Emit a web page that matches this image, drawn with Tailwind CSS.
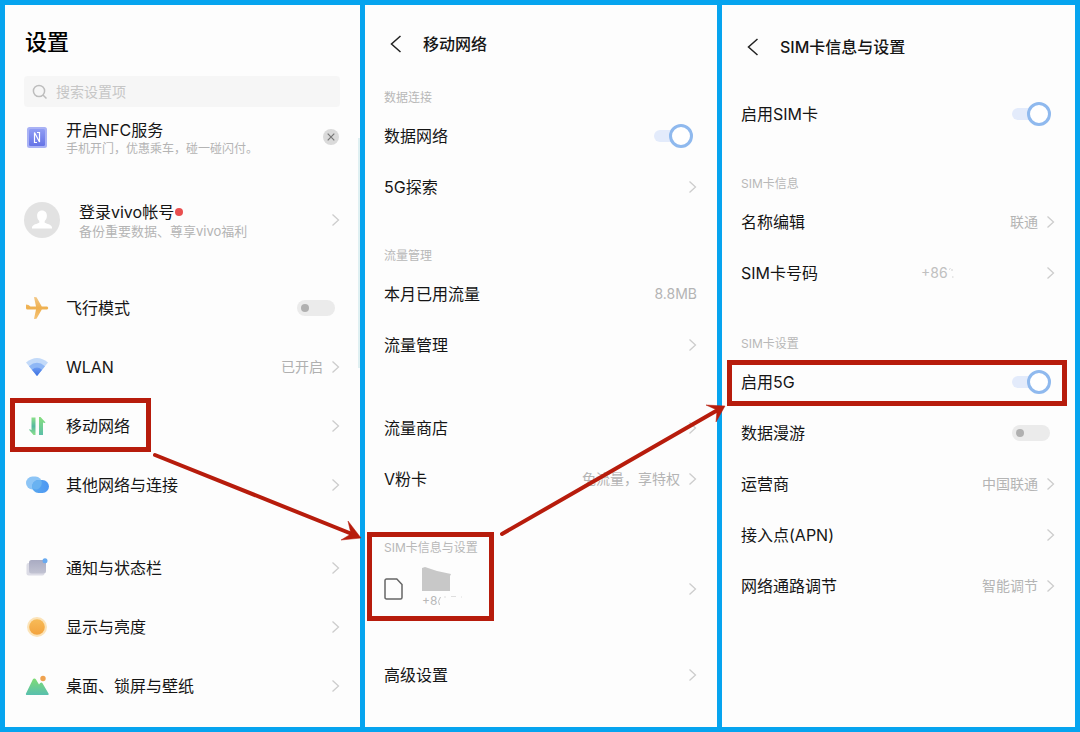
<!DOCTYPE html>
<html lang="zh-CN">
<head>
<meta charset="utf-8">
<meta name="viewport" content="width=device-width, initial-scale=1">
<title>设置</title>
<script src="https://cdn.jsdelivr.net/npm/@tailwindcss/browser@4"></script>
</head>
<body class="font-['Inter','Noto_Sans_CJK_SC',sans-serif] text-[#151515]">
<svg class="hidden" aria-hidden="true">
  <symbol id="chev" viewBox="0 0 8 14"><path d="M.5 1.500l6 5.500-6 5.500" fill="none" stroke="#cdcdcd" stroke-width="1.3"/></symbol>
  <symbol id="back" viewBox="0 0 12 18"><path d="M10.500 1L1.500 9l9 8" fill="none" stroke="#222" stroke-width="1.5"/></symbol>
</svg>
<div class="relative grid min-h-screen grid-cols-[355fr_352fr_353fr] gap-[5px] bg-[#06a4ef] p-[5px]">

  <!-- 设置 -->
  <section class="relative bg-[#fdfdfd] px-5">
    <h1 class="flex h-[71px] items-center pt-1 text-[22px] font-medium text-black">设置</h1>
    <label class="-ml-px flex h-[31px] items-center gap-2 rounded bg-[#f6f6f6] px-2">
      <svg class="size-4" viewBox="0 0 16 16" fill="none" stroke="#bdbdbd" stroke-width="1.5"><circle cx="7" cy="7" r="5.6"/><path d="M11 11l3.500 3.500"/></svg>
      <input type="search" aria-label="搜索设置项" placeholder="搜索设置项" class="min-w-0 flex-1 bg-transparent text-sm outline-none placeholder:text-[#c6c6c6]">
    </label>
    <div class="flex h-[60px] items-center gap-[17px]">
      <svg class="size-6" viewBox="0 0 24 24">
        <defs><linearGradient id="nfc" x1="0" y1="0" x2="0" y2="1"><stop offset="0" stop-color="#8f9cf4"/><stop offset="1" stop-color="#6674e6"/></linearGradient></defs>
        <rect x="2" y="2" width="20" height="21" rx="2.5" fill="#a9b2f5"/><rect x="4" y="4" width="16" height="17" rx="1.5" fill="url(#nfc)"/>
        <path d="M12 17.500H9.500V7.500l5 9.500V7.500H12" fill="none" stroke="#fff" stroke-width="1.2"/>
      </svg>
      <div class="flex-1 pt-[3px]">
        <p class="text-base leading-5">开启NFC服务</p>
        <p class="text-xs leading-[18px] text-[#b4b4b4]">手机开门，优惠乘车，碰一碰闪付。</p>
      </div>
      <button aria-label="关闭" class="mr-px flex size-4 items-center justify-center rounded-full bg-[#dadada]">
        <svg class="size-2" viewBox="0 0 8 8"><path d="M.7.7l6.6 6.6M7.3.7L.7 7.3" stroke="#777" stroke-width="1.2"/></svg>
      </button>
    </div>
    <a href="#account" class="mt-[23px] flex h-[60px] items-center gap-[19px]">
      <svg class="size-9 -ml-px" viewBox="0 0 36 36"><circle cx="18" cy="18" r="18" fill="#e2e2e2"/><path d="M18 8.500c3.200 0 4.900 2.300 4.900 5.300 0 2.400-1 4.200-2.200 5.300v1.600c1.700 1 7.300 1.700 7.300 4.800V26.500H8v-1c0-3.100 5.600-3.800 7.300-4.800v-1.600c-1.200-1.100-2.200-2.900-2.200-5.300 0-3 1.700-5.300 4.900-5.300z" fill="#fff"/></svg>
      <div class="flex-1 pt-px">
        <p class="flex items-center gap-px text-base leading-5">登录vivo帐号<span class="size-2 rounded-full bg-[#e94f4f]"></span></p>
        <p class="text-[13px] leading-[18px] text-[#b4b4b4]">备份重要数据、尊享vivo福利</p>
      </div>
      <svg class="h-[14px] w-2"><use href="#chev"/></svg>
    </a>

    <label class="mt-[28px] flex h-[59px] items-center gap-[17px]">
      <svg class="size-6" viewBox="0 0 24 24">
        <defs><linearGradient id="air" x1="0" y1="0" x2="0" y2="1"><stop offset="0" stop-color="#f2c888"/><stop offset=".5" stop-color="#efb04f"/><stop offset="1" stop-color="#f5c377"/></linearGradient></defs>
        <path d="M1 8.500l2.500.5L5.500 10.500H11L9 1l2.500.2 5.300 9.300h4.700c1 0 1.700.6 1.700 1.500s-.7 1.500-1.700 1.500h-4.700L11.500 22.800 9 23l2-9.500H2.500C1.500 13.500 1 12.800 1 12z" fill="url(#air)"/>
      </svg>
      <span class="flex-1">飞行模式</span>
      <input type="checkbox" role="switch" class="relative mr-[5px] h-4 w-[38px] appearance-none rounded-full bg-[#ebebeb] before:absolute before:left-1 before:top-1 before:size-2 before:rounded-full before:bg-[#b0b0b0]">
    </label>
    <a href="#wlan" class="flex h-[59px] items-center gap-[17px]">
      <svg class="size-6" viewBox="0 0 24 24">
        <defs><linearGradient id="wl" x1="0" y1="0" x2="0" y2="1"><stop offset="0" stop-color="#6d9cf2"/><stop offset="1" stop-color="#3c6fe0"/></linearGradient></defs>
        <path d="M1 7.500Q12-1.500 23 7.500L12 21z" fill="#c3daf9"/><path d="M4 11.200Q12 4.500 20 11.200L12 21z" fill="#8fb7f5"/><path d="M7 14.800Q12 10 17 14.800L12 21z" fill="url(#wl)"/>
      </svg>
      <span class="flex-1">WLAN</span>
      <span class="-mr-2 text-sm text-[#b0b0b0]">已开启</span>
      <svg class="h-[14px] w-2"><use href="#chev"/></svg>
    </a>
    <a href="#mobile" class="relative flex h-[59px] items-center gap-[17px]">
      <svg class="size-6" viewBox="0 0 24 24">
        <defs><linearGradient id="mb1" x1="0" y1="0" x2="0" y2="1"><stop offset="0" stop-color="#8be08a"/><stop offset=".5" stop-color="#55b8a0"/><stop offset="1" stop-color="#8be08a"/></linearGradient><linearGradient id="mb2" x1="0" y1="0" x2="0" y2="1"><stop offset="0" stop-color="#86df7d"/><stop offset="1" stop-color="#5cbfa8"/></linearGradient></defs>
        <path d="M6.500 3.500h4V21H8.500L4 15.800l.7-.6 1.800.8z" fill="url(#mb1)"/><path d="M18 21h-4V3h1.500L20.500 8.500l-.7.6-1.800-.6z" fill="url(#mb2)"/>
      </svg>
      <span class="flex-1">移动网络</span>
      <svg class="h-[14px] w-2"><use href="#chev"/></svg>
      <span class="absolute -left-[15px] top-0.5 h-[54px] w-[141px] border-[5px] border-[#b71c0c]"></span>
    </a>
    <a href="#other" class="flex h-[59px] items-center gap-[17px]">
      <svg class="size-6" viewBox="0 0 24 24">
        <defs><linearGradient id="ot" x1="0" y1="0" x2="1" y2="0"><stop offset="0" stop-color="#5aa9ee"/><stop offset="1" stop-color="#4d97f3"/></linearGradient></defs>
        <rect x="1" y="3.500" width="16" height="13" rx="6.500" fill="#8dc5f6"/><rect x="7" y="7" width="17" height="13" rx="6.500" fill="url(#ot)"/><path d="M7.500 15.500A6.500 6.500 0 0 1 13.500 7H16a6.500 6.500 0 0 1-5 9.500z" fill="#69b2f1"/>
      </svg>
      <span class="flex-1">其他网络与连接</span>
      <svg class="h-[14px] w-2"><use href="#chev"/></svg>
    </a>

    <a href="#notify" class="mt-6 flex h-[59px] items-center gap-[17px]">
      <svg class="size-6" viewBox="0 0 24 24">
        <defs><linearGradient id="nt" x1="0" y1="0" x2="0" y2="1"><stop offset="0" stop-color="#a9abc2"/><stop offset="1" stop-color="#c2c3d2"/></linearGradient></defs>
        <rect x="1.500" y="7" width="18" height="12.500" rx="2" fill="#dcdce6"/><rect x="4" y="4" width="17" height="13.500" rx="2.500" fill="url(#nt)"/><circle cx="20" cy="4.800" r="2.500" fill="#68aaf0"/>
      </svg>
      <span class="flex-1">通知与状态栏</span>
      <svg class="h-[14px] w-2"><use href="#chev"/></svg>
    </a>
    <a href="#display" class="flex h-[59px] items-center gap-[17px]">
      <svg class="size-6" viewBox="0 0 24 24">
        <defs><linearGradient id="su" x1="0" y1="0" x2="0" y2="1"><stop offset="0" stop-color="#f7bb58"/><stop offset="1" stop-color="#f3a33d"/></linearGradient></defs>
        <circle cx="12" cy="12" r="10" fill="#fbe3b8"/><circle cx="12" cy="12" r="7.800" fill="url(#su)"/>
      </svg>
      <span class="flex-1">显示与亮度</span>
      <svg class="h-[14px] w-2"><use href="#chev"/></svg>
    </a>
    <a href="#wallpaper" class="flex h-[59px] items-center gap-[17px]">
      <svg class="size-6" viewBox="0 0 24 24">
        <defs><linearGradient id="mt" x1="0" y1="0" x2="0" y2="1"><stop offset="0" stop-color="#7fdc74"/><stop offset="1" stop-color="#58bfae"/></linearGradient></defs>
        <path d="M1 19.500L7.800 5.500c.7-1.400 2.400-1.400 3.200 0l3 5 1.200-1.500c.7-.8 1.700-.7 2.300.2l6 10.300c.5.900 0 1.500-.8 1.500H2c-1 0-1.400-.7-1-1.500z" fill="url(#mt)"/><circle cx="18" cy="4.500" r="2.700" fill="#efa24f"/>
      </svg>
      <span class="flex-1">桌面、锁屏与壁纸</span>
      <svg class="h-[14px] w-2"><use href="#chev"/></svg>
    </a>
    <span class="absolute right-0 top-[133px] h-[230px] w-[2px] bg-[#dff0f2]"></span>
  </section>

  <!-- 移动网络 -->
  <section class="bg-[#fdfdfd] pl-[19px] pr-5">
    <header class="flex h-[78px] items-center gap-[21px] pl-[6px]">
      <button aria-label="返回"><svg class="h-[18px] w-3"><use href="#back"/></svg></button>
      <h2 class="text-base font-medium">移动网络</h2>
    </header>
    <h3 class="mt-[3px] flex h-6 items-center text-xs text-[#b8b8b8]">数据连接</h3>
    <label class="flex h-[51px] items-center justify-between">数据网络
      <input type="checkbox" role="switch" checked class="relative mr-1 h-6 w-[39px] appearance-none before:absolute before:left-0 before:top-[6px] before:h-3 before:w-7 before:rounded-full before:bg-[#e3ebfb] after:absolute after:right-0 after:top-0 after:size-6 after:rounded-full after:border-[3px] after:border-[#8fb9ee] after:bg-white">
    </label>
    <a href="#explore" class="flex h-[51px] items-center justify-between">5G探索<svg class="h-[14px] w-2"><use href="#chev"/></svg></a>

    <h3 class="mt-8 flex h-6 items-center text-xs text-[#b8b8b8]">流量管理</h3>
    <p class="flex h-[51px] items-center justify-between">本月已用流量<span class="text-sm text-[#b4b4b4]">8.8MB</span></p>
    <a href="#data" class="flex h-[51px] items-center justify-between">流量管理<svg class="h-[14px] w-2"><use href="#chev"/></svg></a>

    <a href="#store" class="mt-8 flex h-[51px] items-center justify-between">流量商店<svg class="h-[14px] w-2"><use href="#chev"/></svg></a>
    <a href="#vcard" class="flex h-[51px] items-center gap-[9px]"><span class="flex-1">V粉卡</span><span class="text-sm text-[#b4b4b4]">免流量，享特权</span><svg class="h-[14px] w-2"><use href="#chev"/></svg></a>

    <div class="relative mt-8">
      <h3 class="flex h-6 items-center text-xs text-[#b8b8b8]">SIM卡信息与设置</h3>
      <a href="#sim" class="flex h-[58px] items-center">
        <svg class="h-[22px] w-[19px]" viewBox="0 0 19 22"><path d="M2.500 1h10.300L18 6.500v13c0 .9-.6 1.500-1.500 1.500h-14C1.600 21 1 20.400 1 19.500v-17C1 1.600 1.600 1 2.500 1z" fill="none" stroke="#666" stroke-width="1.500"/></svg>
        <span class="ml-[19px] flex-1">
          <svg class="h-6 w-[30px]" viewBox="0 0 30 24"><path d="M0 1l3-1 12 4 14 3-1 2v15H0z" fill="#c8c8c8"/></svg>
          <span class="flex items-center text-xs leading-5 text-[#b8b8b8]">+8<svg class="h-3 w-10" viewBox="0 0 40 12"><path d="M3.500 2Q0 6.500 2.500 10" fill="none" stroke="#c0c0c0"/><path d="M7 2h2M14 1.500h5M24 2h1" stroke="#dedede"/></svg></span>
        </span>
        <svg class="h-[14px] w-2"><use href="#chev"/></svg>
      </a>
      <span class="absolute -left-[17px] -top-1 h-[89px] w-[127px] border-[5px] border-[#b71c0c]"></span>
    </div>

    <a href="#advanced" class="mt-[31px] flex h-[51px] items-center justify-between">高级设置<svg class="h-[14px] w-2"><use href="#chev"/></svg></a>
  </section>

  <!-- SIM卡信息与设置 -->
  <section class="bg-[#fdfdfd] pl-[19px] pr-5">
    <header class="flex h-[83px] items-center gap-[21px] pl-[6px]">
      <button aria-label="返回"><svg class="h-[18px] w-3"><use href="#back"/></svg></button>
      <h2 class="text-base font-medium">SIM卡信息与设置</h2>
    </header>
    <label class="flex h-[51px] items-center justify-between">启用SIM卡
      <input type="checkbox" role="switch" checked class="relative mr-1 h-6 w-[39px] appearance-none before:absolute before:left-0 before:top-[6px] before:h-3 before:w-7 before:rounded-full before:bg-[#e3ebfb] after:absolute after:right-0 after:top-0 after:size-6 after:rounded-full after:border-[3px] after:border-[#8fb9ee] after:bg-white">
    </label>

    <h3 class="mt-[33px] flex h-6 items-center text-xs text-[#b8b8b8]">SIM卡信息</h3>
    <a href="#name" class="flex h-[51px] items-center gap-[9px]"><span class="flex-1">名称编辑</span><span class="text-sm text-[#b4b4b4]">联通</span><svg class="h-[14px] w-2"><use href="#chev"/></svg></a>
    <a href="#number" class="flex h-[51px] items-center"><span class="flex-1">SIM卡号码</span><span class="flex w-[126px] items-center text-sm text-[#c0c0c0]">+86<svg class="h-3 w-2" viewBox="0 0 8 12"><path d="M1 2.500l1.500-1M4 2v2M4 10h1.500" stroke="#d0d0d0" fill="none"/></svg></span><svg class="h-[14px] w-2"><use href="#chev"/></svg></a>

    <h3 class="mt-[34px] flex h-6 items-center text-xs text-[#b8b8b8]">SIM卡设置</h3>
    <label class="relative flex h-[51px] items-center justify-between">启用5G
      <input type="checkbox" role="switch" checked class="relative mr-1 h-6 w-[39px] appearance-none before:absolute before:left-0 before:top-[6px] before:h-3 before:w-7 before:rounded-full before:bg-[#e3ebfb] after:absolute after:right-0 after:top-0 after:size-6 after:rounded-full after:border-[3px] after:border-[#8fb9ee] after:bg-white">
      <span class="absolute -left-[14px] -right-3 top-1 h-[46px] border-[5px] border-[#b71c0c]"></span>
    </label>
    <label class="flex h-[51px] items-center justify-between">数据漫游
      <input type="checkbox" role="switch" class="relative mr-[5px] h-4 w-[38px] appearance-none rounded-full bg-[#ebebeb] before:absolute before:left-1 before:top-1 before:size-2 before:rounded-full before:bg-[#b0b0b0]">
    </label>
    <a href="#carrier" class="flex h-[51px] items-center gap-[9px]"><span class="flex-1">运营商</span><span class="text-sm text-[#b4b4b4]">中国联通</span><svg class="h-[14px] w-2"><use href="#chev"/></svg></a>
    <a href="#apn" class="flex h-[51px] items-center justify-between">接入点(APN)<svg class="h-[14px] w-2"><use href="#chev"/></svg></a>
    <a href="#route" class="flex h-[51px] items-center gap-[9px]"><span class="flex-1">网络通路调节</span><span class="text-sm text-[#b4b4b4]">智能调节</span><svg class="h-[14px] w-2"><use href="#chev"/></svg></a>
  </section>

  <!-- 步骤箭头 -->
  <svg class="pointer-events-none absolute left-0 top-0 w-full" viewBox="0 0 1080 732" fill="#b71c0c" stroke="#b71c0c" aria-hidden="true">
    <path d="M155 455L352 534M502 534L716 411" fill="none" stroke-width="4" stroke-linecap="round"/>
    <path d="M361 538L348 521l3 13-10 6zM725 406l-19-1 11 5-1 12z" stroke-width=".5"/>
  </svg>
</div>
</body>
</html>
